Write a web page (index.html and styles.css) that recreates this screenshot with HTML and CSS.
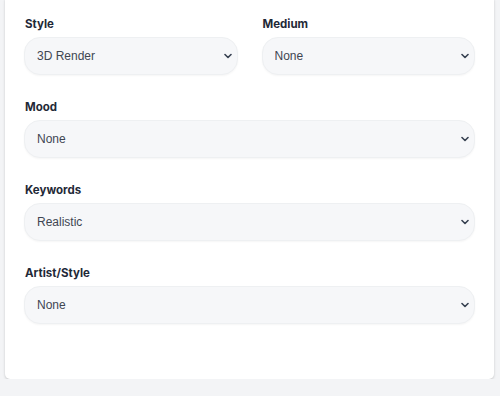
FILE: index.html
```html
<!DOCTYPE html>
<html lang="en">
<head>
    <meta charset="UTF-8">
    <meta name="viewport" content="width=device-width, initial-scale=1.0">
    <title>Prompt Builder</title>
    <link rel="stylesheet" href="styles.css">
</head>
<body>
    <div class="card">
        <form class="options">
            <div class="row">
                <div class="field">
                    <label for="style">Style</label>
                    <select id="style">
                        <option>3D Render</option>
                        <option>None</option>
                    </select>
                </div>
                <div class="field">
                    <label for="medium">Medium</label>
                    <select id="medium">
                        <option>None</option>
                    </select>
                </div>
            </div>

            <div class="field">
                <label for="mood">Mood</label>
                <select id="mood">
                    <option>None</option>
                </select>
            </div>

            <div class="field">
                <label for="keywords">Keywords</label>
                <select id="keywords">
                    <option>Realistic</option>
                    <option>None</option>
                </select>
            </div>

            <div class="field">
                <label for="artist">Artist/Style</label>
                <select id="artist">
                    <option>None</option>
                </select>
            </div>
        </form>
    </div>
</body>
</html>
```

FILE: styles.css
```css
body {
    margin: 0;
    background-color: #f3f4f6;
    font-family: Inter, "Liberation Sans", sans-serif;
}
.card {
    margin: -4px 6px 0 5px;
    padding: 20px 19px 55px 19px;
    background-color: #ffffff;
    border-radius: 5px;
    box-shadow: 0 1px 3px rgba(0, 0, 0, 0.14), 0 1px 2px rgba(0, 0, 0, 0.06);
}
.options {
    display: flex;
    flex-direction: column;
    gap: 24px;
}
.row {
    display: grid;
    grid-template-columns: 1fr 1fr;
    gap: 24px;
}
.field {
    display: flex;
    flex-direction: column;
    gap: 5px;
}
.field label {
    font-size: 11.5px;
    line-height: 16px;
    font-weight: 700;
    color: #1f2937;
    padding-left: 1px;
}
.field select {
    appearance: none;
    height: 38px;
    padding: 0 24px 0 12px;
    font-family: "Liberation Sans", Arial, sans-serif;
    font-size: 12px;
    color: #3f4652;
    background-color: #f6f7f9;
    background-image: url("data:image/svg+xml,%3Csvg xmlns='http://www.w3.org/2000/svg' width='8' height='6' viewBox='0 0 8 6'%3E%3Cpath d='M1 1.5l3 3 3-3' fill='none' stroke='%23374151' stroke-width='1.6' stroke-linecap='round' stroke-linejoin='round'/%3E%3C/svg%3E");
    background-repeat: no-repeat;
    background-position: right 5px center;
    border: 1px solid #eef0f2;
    border-radius: 16px;
    box-shadow: 0 1px 2px rgba(0, 0, 0, 0.04);
}
```
